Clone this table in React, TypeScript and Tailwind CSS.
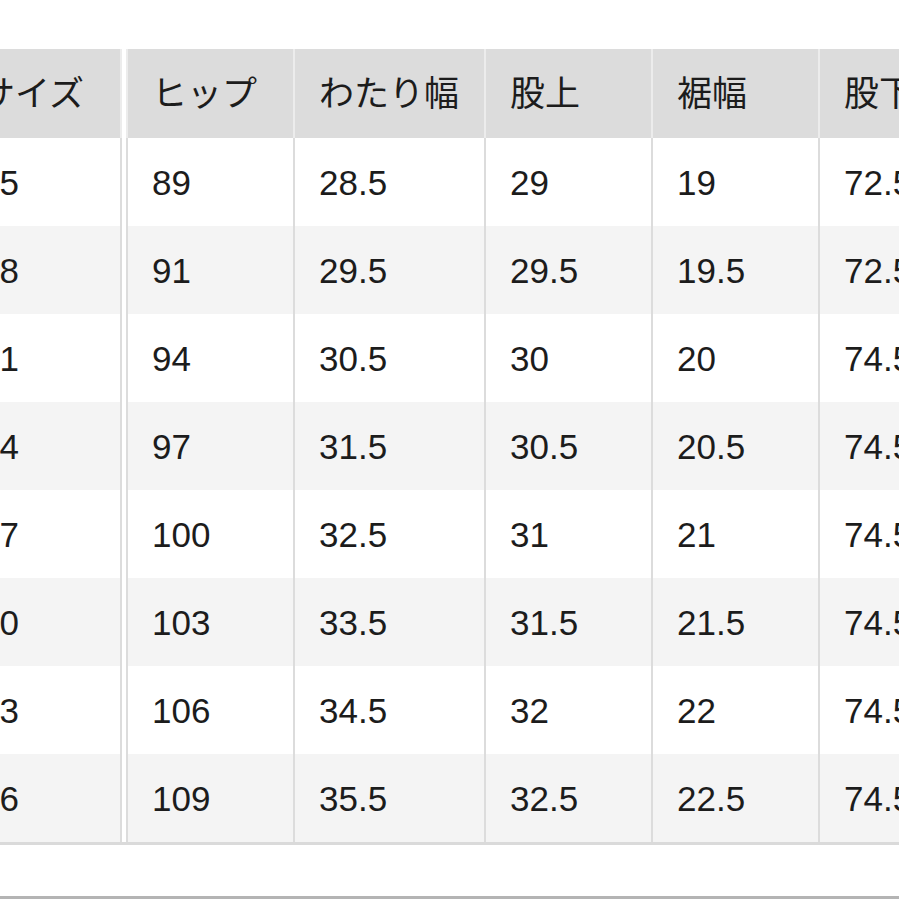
const headers = ["サイズ", "ヒップ", "わたり幅", "股上", "裾幅", "股下"];

const rows = [
  ["65", "89", "28.5", "29", "19", "72.5"],
  ["68", "91", "29.5", "29.5", "19.5", "72.5"],
  ["71", "94", "30.5", "30", "20", "74.5"],
  ["74", "97", "31.5", "30.5", "20.5", "74.5"],
  ["77", "100", "32.5", "31", "21", "74.5"],
  ["80", "103", "33.5", "31.5", "21.5", "74.5"],
  ["83", "106", "34.5", "32", "22", "74.5"],
  ["86", "109", "35.5", "32.5", "22.5", "74.5"],
];

const widths = ["w-[167px]", "w-[191px]", "w-[167px]", "w-[167px]", "w-[167px]"];

function Row({ cells, header, shaded }: { cells: string[]; header?: boolean; shaded?: boolean }) {
  const bg = header ? "bg-[#dcdcdc]" : shaded ? "bg-[#f4f4f4]" : "bg-white";
  const line = header ? "border-[#ececec]" : "border-[#dcdcdc]";
  const h = header ? "h-[89px]" : "h-[88px]";
  return (
    <div className={`flex ${h}`}>
      <div className={`w-[166px] shrink-0 flex items-center pl-6 border-r-2 ${line} ${bg}`}>{cells[0]}</div>
      <div className="w-[4px] shrink-0 bg-white" />
      <div className={`flex ${bg} border-l-2 ${line}`}>
        {cells.slice(1).map((c, i) => (
          <div
            key={i}
            className={`${widths[i]} shrink-0 flex items-center pl-6 ${i < 4 ? `border-r-2 ${line}` : ""}`}
          >
            {c}
          </div>
        ))}
      </div>
    </div>
  );
}

export default function App() {
  return (
    <div
      className="w-[899px] h-[899px] bg-white overflow-hidden relative text-[35px] leading-none text-[#1c1c1c]"
      style={{ fontFamily: '"Liberation Sans", "Noto Sans CJK JP", sans-serif' }}
    >
      <div className="pt-[49px] -ml-[44px]">
        <Row cells={headers} header />
        {rows.map((r, i) => (
          <Row key={i} cells={r} shaded={i % 2 === 1} />
        ))}
        <div className="h-[3px] bg-[#dadada]" />
      </div>
      <div className="absolute left-0 right-0 bottom-0 h-[3px] bg-[#b4b4b4]" />
    </div>
  );
}
